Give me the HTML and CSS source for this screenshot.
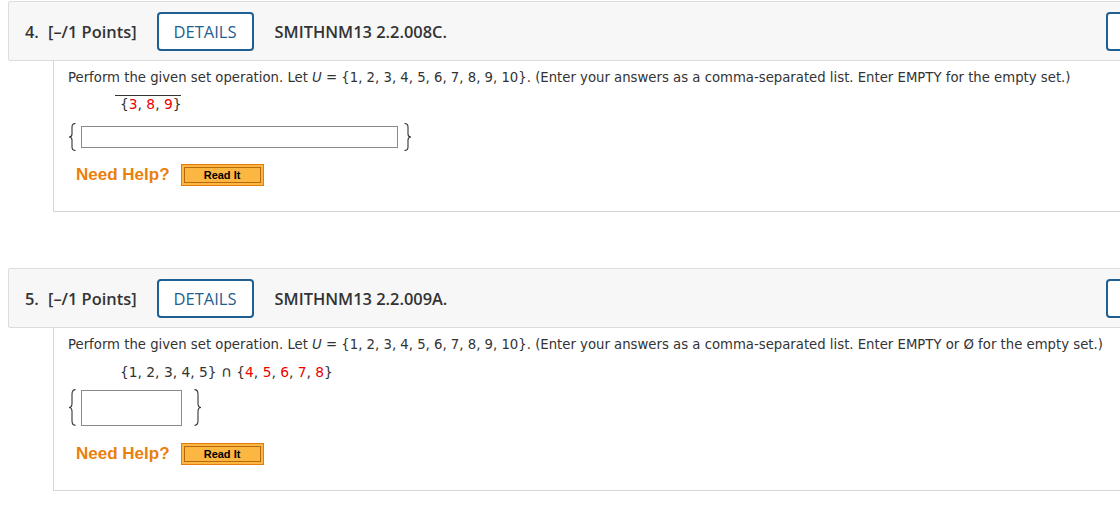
FILE: index.html
```html
<!DOCTYPE html>
<html>
<head>
<meta charset="utf-8">
<link rel="stylesheet" href="styles.css">
</head>
<body>
<div class="page">
  <section class="question q4">
    <header class="qhead">
      <span class="qnum">4.</span>
      <span class="qpts">[–/1 Points]</span>
      <span class="details">DETAILS</span>
      <span class="qid">SMITHNM13 2.2.008C.</span>
      <span class="spacer"></span>
      <span class="rbtn"></span>
    </header>
    <div class="qbody">
      <p class="prompt">Perform the given set operation. Let <i>U</i> = {1, 2, 3, 4, 5, 6, 7, 8, 9, 10}. (Enter your answers as a comma-separated list. Enter EMPTY for the empty set.)</p>
      <div class="math"><span class="over"><span class="b">{</span><span class="r">3</span>, <span class="r">8</span>, <span class="r">9</span><span class="b">}</span></span></div>
      <div class="answer">
        <svg class="brace" width="8" height="28" viewBox="0 0 8 28" preserveAspectRatio="none"><path d="M7.5,0.5 Q4,0.5 4,4 L4,11 Q4,14 1,14 Q4,14 4,17 L4,24 Q4,27.5 7.5,27.5" fill="none" stroke="#333" stroke-width="1.1" vector-effect="non-scaling-stroke"/></svg>
        <span class="box wide"></span>
        <svg class="brace" width="8" height="28" viewBox="0 0 8 28" preserveAspectRatio="none"><path d="M0.5,0.5 Q4,0.5 4,4 L4,11 Q4,14 7,14 Q4,14 4,17 L4,24 Q4,27.5 0.5,27.5" fill="none" stroke="#333" stroke-width="1.1" vector-effect="non-scaling-stroke"/></svg>
      </div>
      <div class="help">
        <span class="need">Need Help?</span>
        <span class="readit"><span>Read It</span></span>
      </div>
    </div>
  </section>

  <section class="question q5">
    <header class="qhead">
      <span class="qnum">5.</span>
      <span class="qpts">[–/1 Points]</span>
      <span class="details">DETAILS</span>
      <span class="qid">SMITHNM13 2.2.009A.</span>
      <span class="spacer"></span>
      <span class="rbtn"></span>
    </header>
    <div class="qbody">
      <p class="prompt">Perform the given set operation. Let <i>U</i> = {1, 2, 3, 4, 5, 6, 7, 8, 9, 10}. (Enter your answers as a comma-separated list. Enter EMPTY or Ø for the empty set.)</p>
      <div class="math math2">{1, 2, 3, 4, 5} <span class="cap">∩</span> <span class="b">{</span><span class="r">4</span>, <span class="r">5</span>, <span class="r">6</span>, <span class="r">7</span>, <span class="r">8</span><span class="b">}</span></div>
      <div class="answer tall">
        <svg class="brace" width="8" height="37" viewBox="0 0 8 28" preserveAspectRatio="none"><path d="M7.5,0.5 Q4,0.5 4,4 L4,11 Q4,14 1,14 Q4,14 4,17 L4,24 Q4,27.5 7.5,27.5" fill="none" stroke="#333" stroke-width="1.1" vector-effect="non-scaling-stroke"/></svg>
        <span class="box small"></span>
        <svg class="brace rb" width="8" height="37" viewBox="0 0 8 28" preserveAspectRatio="none"><path d="M0.5,0.5 Q4,0.5 4,4 L4,11 Q4,14 7,14 Q4,14 4,17 L4,24 Q4,27.5 0.5,27.5" fill="none" stroke="#333" stroke-width="1.1" vector-effect="non-scaling-stroke"/></svg>
      </div>
      <div class="help">
        <span class="need">Need Help?</span>
        <span class="readit"><span>Read It</span></span>
      </div>
    </div>
  </section>
</div>
</body>
</html>
```
FILE: styles.css
```css
html, body {
  margin: 0;
  padding: 0;
  background: #fff;
  overflow: hidden;
}
.page {
  padding: 1px 0 0 8px;
  width: 1180px;
}
.question + .question {
  margin-top: 56px;
}
.qhead {
  display: flex;
  align-items: center;
  height: 58px;
  background: #f7f7f7;
  border: 1px solid #dcdcdc;
  border-radius: 2px;
  font-family: "Open Sans", sans-serif;
  color: #333;
  padding-left: 16px;
}
.qnum {
  font-weight: 600;
  font-size: 16.4px;
  width: 23px;
}
.qpts {
  font-weight: 600;
  font-size: 16.4px;
  margin-right: 20px;
}
.details {
  box-sizing: border-box;
  width: 97px;
  height: 39px;
  border: 2px solid #1f5f91;
  border-radius: 4px;
  color: #1f5f91;
  font-size: 16.5px;
  display: flex;
  align-items: center;
  justify-content: center;
  margin-right: 21px;
  background: #fff;
}
.qid {
  font-weight: 600;
  font-size: 16.4px;
}
.spacer { flex: 1; }
.rbtn {
  box-sizing: border-box;
  width: 72px;
  height: 39px;
  border: 2px solid #1f5f91;
  border-radius: 4px;
  margin-right: 9px;
  background: #fff;
}
.qbody {
  margin-left: 45px;
  border-left: 1px solid #d6d6d6;
  border-bottom: 1px solid #d6d6d6;
  padding: 8px 0 0 14px;
  font-family: "DejaVu Sans", Verdana, sans-serif;
  color: #333;
}
.q4 .qbody { height: 142px; }
.q5 .qbody { height: 154px; }
.prompt {
  margin: 0;
  font-size: 13.25px;
  line-height: 17px;
  white-space: nowrap;
}
.math {
  font-size: 13.8px;
  line-height: 16px;
  margin: 9px 0 0 52px;
}
.math2 { margin-top: 11px; }
.cap { font-size: 15px; }
.over {
  border-top: 1px solid #333;
  display: inline-block;
  margin-left: -5px;
  padding-left: 5px;
}
.b { color: #333; }
.r { color: #ee0000; }
.answer {
  display: flex;
  align-items: center;
  margin-top: 11px;
  height: 28px;
}
.answer.tall {
  height: 37px;
  margin-top: 9px;
}
.brace {
  display: block;
}
.box {
  box-sizing: border-box;
  display: block;
  border: 1px solid #8a8a8a;
  background: #fff;
  margin: 0 6px 0 5px;
}
.box.wide {
  width: 317px;
  height: 22px;
}
.box.small {
  width: 101px;
  height: 36px;
  margin-right: 12px;
}
.help {
  display: flex;
  align-items: center;
  margin-top: 13px;
  margin-left: 8px;
}
.tall + .help { margin-top: 17px; }
.need {
  font-family: "Liberation Sans", Arial, sans-serif;
  font-weight: bold;
  font-size: 17px;
  color: #ea7f0d;
  margin-right: 11px;
}
.readit {
  box-sizing: border-box;
  width: 83px;
  height: 22px;
  border: 1px solid #e27d0c;
  background: #fcb743;
  padding: 2px;
  display: flex;
}
.readit span {
  flex: 1;
  border: 1px solid #b9690a;
  display: flex;
  align-items: center;
  justify-content: center;
  font-family: "Liberation Sans", Arial, sans-serif;
  font-weight: bold;
  font-size: 11px;
  color: #000;
}
```
